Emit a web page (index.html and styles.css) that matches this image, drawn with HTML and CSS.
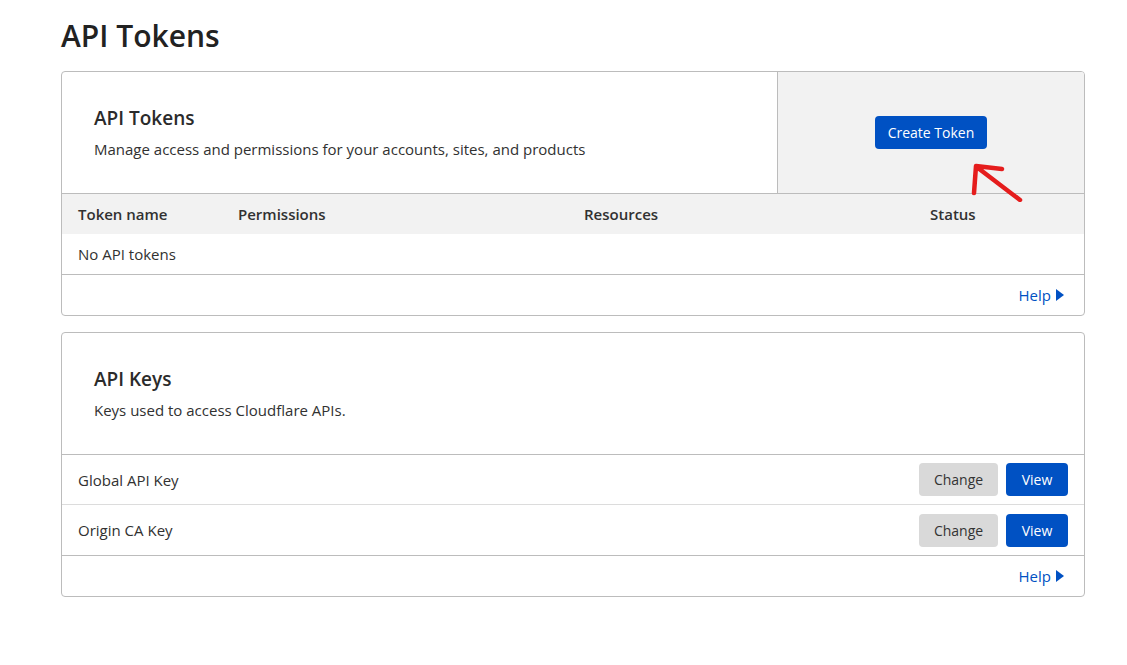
FILE: index.html
```html
<!DOCTYPE html>
<html lang="en">
<head>
<meta charset="utf-8">
<title>API Tokens</title>
<link rel="stylesheet" href="styles.css">
</head>
<body>
<main class="page">
  <h1 class="page-title">API Tokens</h1>

  <section class="card">
    <div class="card-head">
      <div class="card-intro">
        <h2 class="card-title">API Tokens</h2>
        <p class="card-desc">Manage access and permissions for your accounts, sites, and products</p>
      </div>
      <div class="card-aside">
        <button class="btn btn-primary btn-create">Create Token</button>
        <svg class="annot-arrow" width="60" height="50" viewBox="0 0 60 50" aria-hidden="true">
          <path d="M8 41 L10 14 M10 14 L36 17 M12 16 L54 48" fill="none" stroke="#e51d1d" stroke-width="4.5" stroke-linecap="round" stroke-linejoin="round"/>
        </svg>
      </div>
    </div>
    <div class="tbl">
      <div class="tbl-row tbl-head">
        <div class="tbl-cell">Token name</div>
        <div class="tbl-cell">Permissions</div>
        <div class="tbl-cell">Resources</div>
        <div class="tbl-cell">Status</div>
      </div>
      <div class="tbl-row tbl-empty">
        <div class="tbl-cell">No API tokens</div>
      </div>
    </div>
    <div class="card-foot">
      <a class="help-link" href="#">Help<svg class="help-caret" width="8" height="12" viewBox="0 0 8 12"><path d="M0 0 L8 6 L0 12 Z" fill="#0051c3"/></svg></a>
    </div>
  </section>

  <section class="card">
    <div class="card-head">
      <div class="card-intro">
        <h2 class="card-title">API Keys</h2>
        <p class="card-desc">Keys used to access Cloudflare APIs.</p>
      </div>
    </div>
    <div class="key-list">
      <div class="key-row">
        <span class="key-name">Global API Key</span>
        <div class="key-actions">
          <button class="btn btn-secondary">Change</button>
          <button class="btn btn-primary btn-view">View</button>
        </div>
      </div>
      <div class="key-row">
        <span class="key-name">Origin CA Key</span>
        <div class="key-actions">
          <button class="btn btn-secondary">Change</button>
          <button class="btn btn-primary btn-view">View</button>
        </div>
      </div>
    </div>
    <div class="card-foot">
      <a class="help-link" href="#">Help<svg class="help-caret" width="8" height="12" viewBox="0 0 8 12"><path d="M0 0 L8 6 L0 12 Z" fill="#0051c3"/></svg></a>
    </div>
  </section>
</main>
</body>
</html>
```

FILE: styles.css
```css
* { box-sizing: border-box; }

html, body {
  margin: 0;
  padding: 0;
  background: #ffffff;
}

body {
  font-family: "Open Sans", "Noto Sans", "Liberation Sans", sans-serif;
  color: #313131;
  font-size: 15px;
}

.page {
  width: 1024px;
  margin-left: 61px;
  padding-top: 15px;
}

.page-title {
  margin: 0 0 14px 0;
  font-size: 30px;
  font-weight: 600;
  line-height: 42px;
  color: #222;
}

.card {
  border: 1px solid #bcbcbc;
  border-radius: 4px;
  margin-bottom: 16px;
  overflow: hidden;
}

.card-head {
  display: flex;
  min-height: 122px;
  border-bottom: 1px solid #bcbcbc;
}

.card-intro {
  flex: 1;
  display: flex;
  flex-direction: column;
  justify-content: center;
  padding: 0 32px;
}

.card-title {
  margin: 0 0 7px 0;
  font-size: 19px;
  font-weight: 600;
  line-height: 26px;
  color: #2b2b2b;
}

.card-desc {
  margin: 0;
  font-size: 15px;
  line-height: 22px;
}

.card-aside {
  position: relative;
  width: 307px;
  background: #f2f2f2;
  border-left: 1px solid #bcbcbc;
  display: flex;
  align-items: center;
  justify-content: center;
}

.annot-arrow {
  position: absolute;
  left: 188px;
  top: 80px;
}

.btn {
  font-family: inherit;
  font-size: 14px;
  height: 33px;
  border: none;
  border-radius: 4px;
  padding: 0;
  white-space: nowrap;
  cursor: pointer;
}

.btn-primary {
  background: #0051c3;
  color: #ffffff;
}

.btn-create {
  width: 112px;
}

.btn-secondary {
  background: #d9d9d9;
  color: #333;
  width: 79px;
}

.btn-view {
  width: 62px;
}

.tbl-row {
  display: grid;
  grid-template-columns: 160px 346px 346px 1fr;
  height: 40px;
  align-items: center;
}

.tbl-cell {
  padding-left: 16px;
}

.tbl-head {
  background: #f2f2f2;
  font-weight: 600;
}

.tbl-empty {
  height: 41px;
  border-bottom: 1px solid #bcbcbc;
}

.tbl-empty .tbl-cell {
  grid-column: 1 / -1;
}

.card-foot {
  height: 40px;
  display: flex;
  align-items: center;
  justify-content: flex-end;
  padding-right: 20px;
}

.help-link {
  color: #0051c3;
  text-decoration: none;
  font-size: 15px;
  display: inline-flex;
  align-items: center;
  gap: 5px;
}

.key-list {
  border-bottom: 1px solid #bcbcbc;
}

.key-row {
  display: flex;
  align-items: center;
  justify-content: space-between;
  height: 50px;
  padding: 0 16px;
}

.key-row:not(:last-child) {
  border-bottom: 1px solid #dcdcdc;
}

.key-actions {
  display: flex;
  gap: 8px;
}
```
